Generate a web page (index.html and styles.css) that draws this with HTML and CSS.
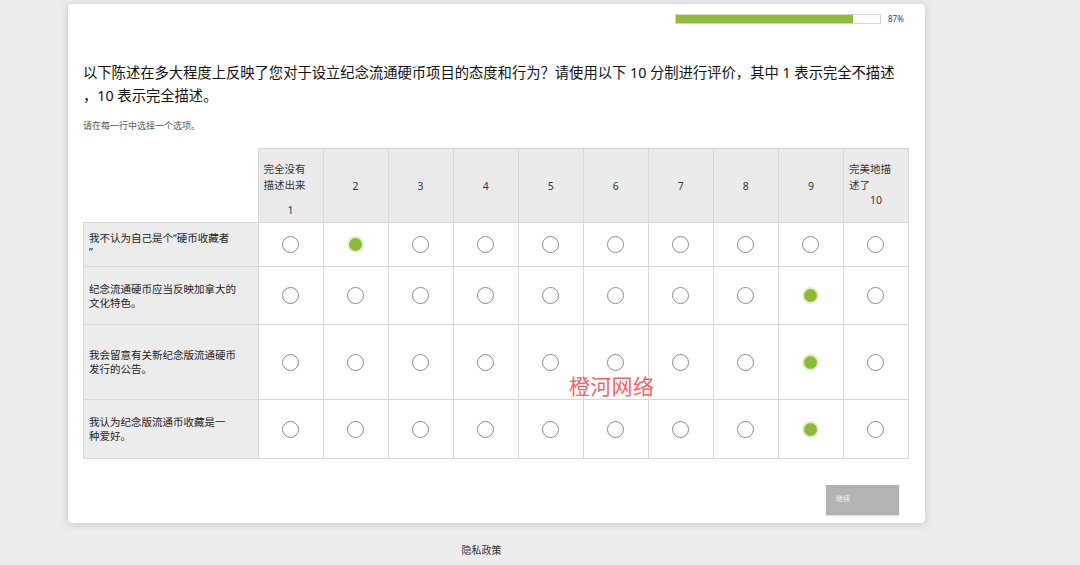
FILE: index.html
```html
<!DOCTYPE html>
<html lang="zh">
<head>
  <meta charset="UTF-8" />
  <title>问卷</title>
  <link rel="stylesheet" href="styles.css">
</head>
<body>
  <div class="card">
    <div class="progress">
      <div class="bar"><div class="fill" style="width: 87%"></div></div>
      <span class="pct">87%</span>
    </div>

    <h2 class="question">以下陈述在多大程度上反映了您对于设立纪念流通硬币项目的态度和行为？请使用以下 10 分制进行评价，其中 1 表示完全不描述<br>，10 表示完全描述。</h2>
    <p class="hint">请在每一行中选择一个选项。</p>

    <table class="grid">
      <tr class="head">
        <th class="blank"></th>
        <th class="edge"><span class="edge-text">完全没有<br>描述出来</span><span class="edge-num n1">1</span></th>
        <th>2</th><th>3</th><th>4</th><th>5</th><th>6</th><th>7</th><th>8</th><th>9</th>
        <th class="edge"><span class="edge-text">完美地描<br>述了</span><span class="edge-num n10">10</span></th>
      </tr>
      <tr class="r1">
        <td class="label">我不认为自己是个“硬币收藏者<br>”</td>
        <td><span class="radio"></span></td><td><span class="radio on"></span></td><td><span class="radio"></span></td><td><span class="radio"></span></td><td><span class="radio"></span></td><td><span class="radio"></span></td><td><span class="radio"></span></td><td><span class="radio"></span></td><td><span class="radio"></span></td><td><span class="radio"></span></td>
      </tr>
      <tr class="r2">
        <td class="label">纪念流通硬币应当反映加拿大的<br>文化特色。</td>
        <td><span class="radio"></span></td><td><span class="radio"></span></td><td><span class="radio"></span></td><td><span class="radio"></span></td><td><span class="radio"></span></td><td><span class="radio"></span></td><td><span class="radio"></span></td><td><span class="radio"></span></td><td><span class="radio on"></span></td><td><span class="radio"></span></td>
      </tr>
      <tr class="r3">
        <td class="label">我会留意有关新纪念版流通硬币<br>发行的公告。</td>
        <td><span class="radio"></span></td><td><span class="radio"></span></td><td><span class="radio"></span></td><td><span class="radio"></span></td><td><span class="radio"></span></td><td><span class="radio"></span></td><td><span class="radio"></span></td><td><span class="radio"></span></td><td><span class="radio on"></span></td><td><span class="radio"></span></td>
      </tr>
      <tr class="r4">
        <td class="label">我认为纪念版流通币收藏是一<br>种爱好。</td>
        <td><span class="radio"></span></td><td><span class="radio"></span></td><td><span class="radio"></span></td><td><span class="radio"></span></td><td><span class="radio"></span></td><td><span class="radio"></span></td><td><span class="radio"></span></td><td><span class="radio"></span></td><td><span class="radio on"></span></td><td><span class="radio"></span></td>
      </tr>
    </table>

    <div class="actions">
      <button class="next">继续</button>
    </div>

    <div class="watermark">橙河网络</div>
  </div>

  <footer>
    <a href="#">隐私政策</a>
  </footer>
</body>
</html>
```

FILE: styles.css
```css
body {
  margin: 0;
  background-color: #ededed;
  font-family: "Noto Sans", "Noto Sans CJK SC", sans-serif;
  color: #222;
}
.card {
  position: relative;
  width: 857px;
  height: 519px;
  margin: 4px 0 0 68px;
  background-color: #fff;
  border-radius: 4px;
  box-shadow: 0 1px 8px rgba(0,0,0,0.18);
  box-sizing: border-box;
  padding: 9px 19px 0 15px;
}
.progress {
  display: flex;
  justify-content: flex-end;
  align-items: center;
  gap: 7px;
}
.bar {
  width: 204px;
  height: 8px;
  border: 1px solid #d4d4d4;
  background-color: #fff;
}
.fill {
  height: 100%;
  background-color: #8fbc3f;
}
.pct {
  font-size: 8px;
  color: #444;
  width: 18px;
}
.question {
  margin: 37px 0 0;
  font-size: 14.3px;
  font-weight: normal;
  line-height: 23px;
  color: #111;
}
.hint {
  margin: 12px 0 0;
  font-size: 9px;
  color: #555;
}
.grid {
  margin-top: 16px;
  border-collapse: collapse;
  width: 826px;
  table-layout: fixed;
}
.grid th, .grid td {
  border: 1px solid #d8d8d8;
  text-align: center;
  font-size: 10.5px;
  font-weight: normal;
  padding: 0;
}
.grid th {
  background-color: #ebebeb;
  height: 73px;
  color: #333;
}
.grid th.blank {
  width: 174px;
  background-color: transparent;
  border: none;
  border-right: 1px solid #d8d8d8;
}
.edge {
  text-align: left;
  vertical-align: top;
}
.edge-text {
  display: block;
  text-align: left;
  padding: 12px 0 0 5px;
  line-height: 16px;
}
.edge-num {
  display: block;
  text-align: center;
}
.n1 {
  margin-top: 10px;
}
.n10 {
  margin-top: 0;
}
.grid td.label {
  background-color: #ececec;
  text-align: left;
  padding: 0 5px;
  line-height: 14px;
  color: #222;
}
.r1 td { height: 43px; }
.r2 td { height: 57px; }
.r3 td { height: 74px; }
.r4 td { height: 58px; }
.radio {
  display: inline-block;
  width: 15px;
  height: 15px;
  border: 1.5px solid #8a8a8a;
  border-radius: 50%;
  vertical-align: middle;
  background-color: #fff;
}
.radio.on {
  width: 13px;
  height: 13px;
  border: 2.5px solid #e4efd2;
  background-color: #8dba3a;
}
.actions {
  display: flex;
  justify-content: flex-end;
  margin-top: 26px;
  padding-right: 7px;
}
.next {
  width: 73px;
  height: 30px;
  background-color: #b2b2b2;
  border: none;
  color: #f4f4f4;
  font-family: inherit;
  font-size: 7px;
  text-align: left;
  padding: 0 0 4px 10px;
  box-shadow: 0 1px 2px rgba(0,0,0,0.15);
}
.watermark {
  position: absolute;
  left: 501px;
  top: 366px;
  font-size: 21px;
  color: #f26464;
  letter-spacing: 0.3px;
}
footer {
  width: 857px;
  margin-left: 53px;
  text-align: center;
  padding-top: 14px;
}
footer a {
  font-size: 10px;
  color: #333;
  text-decoration: none;
}
```
